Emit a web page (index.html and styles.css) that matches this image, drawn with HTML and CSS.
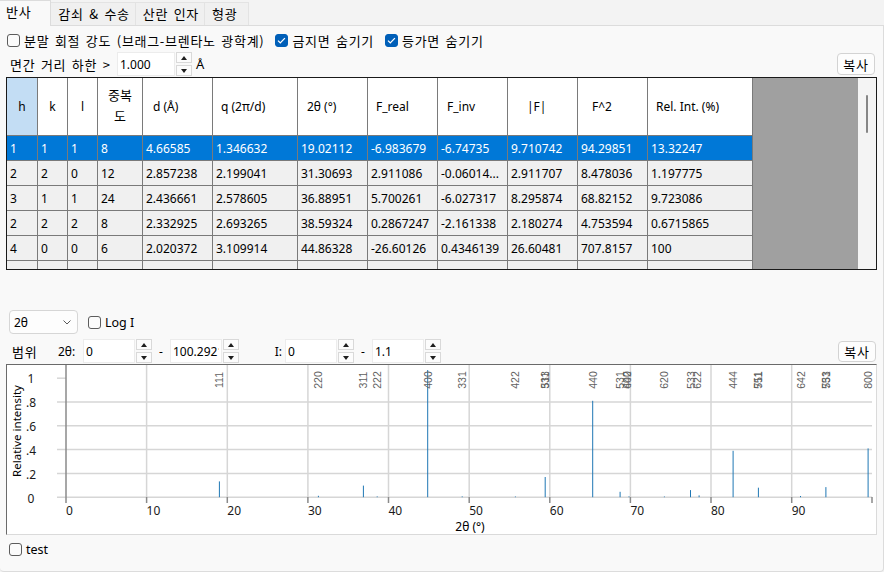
FILE: index.html
```html
<!doctype html>
<html>
    <head>
        <meta charset="utf-8">
        <title>반사</title>
        <link rel="stylesheet" href="styles.css">
    </head>
    <body>
        <div class="tabs">
            <div class="tab ko active">반사</div>
            <div class="tab ko">감쇠 &amp; 수송</div>
            <div class="tab ko">산란 인자</div>
            <div class="tab ko last">형광</div>
        </div>
        <div class="page">
            <div class="opts">
                <label class="check"><span class="cb"></span><span class="ko">분말 회절 강도 (브래그-브렌타노 광학계)</span></label>
                <label class="check"><span class="cb on"><svg viewBox="0 0 13 13"><path d="M3 6.6l2.3 2.3 4.6-4.8"/></svg></span><span class="ko">금지면 숨기기</span></label>
                <label class="check"><span class="cb on"><svg viewBox="0 0 13 13"><path d="M3 6.6l2.3 2.3 4.6-4.8"/></svg></span><span class="ko">등가면 숨기기</span></label>
            </div>
            <div class="dmin">
                <span class="lbl ko">면간 거리 하한 &gt;</span>
                <div class="spin wide"><input type="text" value="1.000"><div class="arrows"><span class="up"></span><span class="down"></span></div></div>
                <span class="unit">Å</span>
                <button type="button" class="btn ko">복사</button>
            </div>

            <div class="grid">
                <table class="refl">
                    <thead>
                        <tr>
                            <th class="w-h ctr sorted">h</th>
                            <th class="w-k ctr">k</th>
                            <th class="w-k ctr">l</th>
                            <th class="w-m ctr">중복<br>도</th>
                            <th class="w-d p10">d (Å)</th>
                            <th class="w-q p8">q (2π/d)</th>
                            <th class="w-d p9">2θ (°)</th>
                            <th class="w-d p8">F_real</th>
                            <th class="w-d p9">F_inv</th>
                            <th class="w-d p19">|F|</th>
                            <th class="w-d p14">F^2</th>
                            <th class="w-r p8">Rel. Int. (%)</th>
                        </tr>
                    </thead>
                    <tbody>
                        <tr class="cur"><td>1</td><td>1</td><td>1</td><td>8</td><td>4.66585</td><td>1.346632</td><td>19.02112</td><td>-6.983679</td><td>-6.74735</td><td>9.710742</td><td>94.29851</td><td>13.32247</td></tr>
                        <tr><td>2</td><td>2</td><td>0</td><td>12</td><td>2.857238</td><td>2.199041</td><td>31.30693</td><td>2.911086</td><td>-0.06014...</td><td>2.911707</td><td>8.478036</td><td>1.197775</td></tr>
                        <tr><td>3</td><td>1</td><td>1</td><td>24</td><td>2.436661</td><td>2.578605</td><td>36.88951</td><td>5.700261</td><td>-6.027317</td><td>8.295874</td><td>68.82152</td><td>9.723086</td></tr>
                        <tr><td>2</td><td>2</td><td>2</td><td>8</td><td>2.332925</td><td>2.693265</td><td>38.59324</td><td>0.2867247</td><td>-2.161338</td><td>2.180274</td><td>4.753594</td><td>0.6715865</td></tr>
                        <tr><td>4</td><td>0</td><td>0</td><td>6</td><td>2.020372</td><td>3.109914</td><td>44.86328</td><td>-26.60126</td><td>0.4346139</td><td>26.60481</td><td>707.8157</td><td>100</td></tr>
                        <tr><td></td><td></td><td></td><td></td><td></td><td></td><td></td><td></td><td></td><td></td><td></td><td></td></tr>
                    </tbody>
                </table>
                <div class="grid-fill"></div>
                <div class="vscroll"><span class="thumb"></span></div>
            </div>

            <div class="plotbar">
                <div class="combo"><span>2θ</span><svg width="8" height="5" viewBox="0 0 8 5"><path d="M0.5 0.5l3.5 3.5 3.5-3.5"/></svg></div>
                <label class="check"><span class="cb"></span>Log I</label>
            </div>
            <div class="range">
                <span class="r-title ko">범위</span>
                <span class="r-axis">2θ:</span>
                <div class="spin"><input type="text" value="0"><div class="arrows"><span class="up"></span><span class="down"></span></div></div>
                <span class="dash">-</span>
                <div class="spin"><input type="text" value="100.2921"><div class="arrows"><span class="up"></span><span class="down"></span></div></div>
                <span class="r-axis i">I:</span>
                <div class="spin"><input type="text" value="0"><div class="arrows"><span class="up"></span><span class="down"></span></div></div>
                <span class="dash">-</span>
                <div class="spin"><input type="text" value="1.1"><div class="arrows"><span class="up"></span><span class="down"></span></div></div>
                <button type="button" class="btn ko">복사</button>
            </div>

            <div class="chart">
                <svg width="868" height="169" viewBox="8 365 868 169">
                    <g class="gridlines">
                        <line x1="58" y1="497.2" x2="873" y2="497.2"/>
                        <line x1="58" y1="473.4" x2="873" y2="473.4"/>
                        <line x1="58" y1="449.6" x2="873" y2="449.6"/>
                        <line x1="58" y1="425.8" x2="873" y2="425.8"/>
                        <line x1="58" y1="402" x2="873" y2="402"/>
                        <line x1="58" y1="378.2" x2="67" y2="378.2"/>
                        <line x1="147.6" y1="365" x2="147.6" y2="497"/>
                        <line x1="228.3" y1="365" x2="228.3" y2="497"/>
                        <line x1="308.9" y1="365" x2="308.9" y2="497"/>
                        <line x1="389.5" y1="365" x2="389.5" y2="497"/>
                        <line x1="470.2" y1="365" x2="470.2" y2="497"/>
                        <line x1="550.8" y1="365" x2="550.8" y2="497"/>
                        <line x1="631.4" y1="365" x2="631.4" y2="497"/>
                        <line x1="712" y1="365" x2="712" y2="497"/>
                        <line x1="792.7" y1="365" x2="792.7" y2="497"/>
                    </g>
                    <g class="axis">
                        <line x1="67" y1="365" x2="67" y2="503"/>
                        <line x1="147.6" y1="497" x2="147.6" y2="503"/>
                        <line x1="228.3" y1="497" x2="228.3" y2="503"/>
                        <line x1="308.9" y1="497" x2="308.9" y2="503"/>
                        <line x1="389.5" y1="497" x2="389.5" y2="503"/>
                        <line x1="470.2" y1="497" x2="470.2" y2="503"/>
                        <line x1="550.8" y1="497" x2="550.8" y2="503"/>
                        <line x1="631.4" y1="497" x2="631.4" y2="503"/>
                        <line x1="712" y1="497" x2="712" y2="503"/>
                        <line x1="792.7" y1="497" x2="792.7" y2="503"/>
                        <line x1="873" y1="497" x2="873" y2="503"/>
                    </g>
                    <g class="peaks">
                        <line x1="220.4" y1="497.2" x2="220.4" y2="481.4"/>
                        <line x1="319.4" y1="497.2" x2="319.4" y2="495.8"/>
                        <line x1="364.4" y1="497.2" x2="364.4" y2="485.6"/>
                        <line x1="378.2" y1="497.2" x2="378.2" y2="496.4"/>
                        <line x1="428.7" y1="497.2" x2="428.7" y2="370"/>
                        <line x1="463.2" y1="497.2" x2="463.2" y2="496.4"/>
                        <line x1="516.4" y1="497.2" x2="516.4" y2="496.5"/>
                        <line x1="546.2" y1="497.2" x2="546.2" y2="477"/>
                        <line x1="593.7" y1="497.2" x2="593.7" y2="400.8"/>
                        <line x1="621.1" y1="497.2" x2="621.1" y2="491.8"/>
                        <line x1="630" y1="497.2" x2="630" y2="496.4"/>
                        <line x1="665.4" y1="497.2" x2="665.4" y2="496.5"/>
                        <line x1="691.5" y1="497.2" x2="691.5" y2="490.1"/>
                        <line x1="700.1" y1="497.2" x2="700.1" y2="495.4"/>
                        <line x1="734.1" y1="497.2" x2="734.1" y2="450.8"/>
                        <line x1="759.4" y1="497.2" x2="759.4" y2="487.7"/>
                        <line x1="801.5" y1="497.2" x2="801.5" y2="496"/>
                        <line x1="826.9" y1="497.2" x2="826.9" y2="487.1"/>
                        <line x1="869.1" y1="497.2" x2="869.1" y2="448.4"/>
                    </g>
                    <g class="hkl">
                        <text x="220.4" y="380" transform="rotate(-90 220.4 380)">111</text>
                        <text x="319.4" y="380" transform="rotate(-90 319.4 380)">220</text>
                        <text x="364.4" y="380" transform="rotate(-90 364.4 380)">311</text>
                        <text x="378.2" y="380" transform="rotate(-90 378.2 380)">222</text>
                        <text x="428.7" y="380" transform="rotate(-90 428.7 380)">400</text>
                        <text x="463.2" y="380" transform="rotate(-90 463.2 380)">331</text>
                        <text x="516.4" y="380" transform="rotate(-90 516.4 380)">422</text>
                        <text x="546.2" y="380" transform="rotate(-90 546.2 380)">333</text>
                        <text x="546.2" y="380" transform="rotate(-90 546.2 380)">511</text>
                        <text x="593.7" y="380" transform="rotate(-90 593.7 380)">440</text>
                        <text x="621.1" y="380" transform="rotate(-90 621.1 380)">531</text>
                        <text x="628" y="380" transform="rotate(-90 628 380)">442</text>
                        <text x="628" y="380" transform="rotate(-90 628 380)">600</text>
                        <text x="665.4" y="380" transform="rotate(-90 665.4 380)">620</text>
                        <text x="691.5" y="380" transform="rotate(-90 691.5 380)">533</text>
                        <text x="698" y="380" transform="rotate(-90 698 380)">622</text>
                        <text x="734.1" y="380" transform="rotate(-90 734.1 380)">444</text>
                        <text x="759.4" y="380" transform="rotate(-90 759.4 380)">551</text>
                        <text x="759.4" y="380" transform="rotate(-90 759.4 380)">711</text>
                        <text x="801.5" y="380" transform="rotate(-90 801.5 380)">642</text>
                        <text x="826.9" y="380" transform="rotate(-90 826.9 380)">553</text>
                        <text x="826.9" y="380" transform="rotate(-90 826.9 380)">731</text>
                        <text x="869.1" y="380" transform="rotate(-90 869.1 380)">800</text>
                    </g>
                    <g class="ticklbl">
                        <text x="67" y="515">0</text>
                        <text x="147.6" y="515">10</text>
                        <text x="228.3" y="515">20</text>
                        <text x="308.9" y="515">30</text>
                        <text x="389.5" y="515">40</text>
                        <text x="470.2" y="515">50</text>
                        <text x="550.8" y="515">60</text>
                        <text x="631.4" y="515">70</text>
                        <text x="712" y="515">80</text>
                        <text x="792.7" y="515">90</text>
                    </g>
                    <g class="ticklbl ylbl">
                        <text x="32" y="383">1</text>
                        <text x="32" y="407">.8</text>
                        <text x="32" y="431">.6</text>
                        <text x="32" y="455">.4</text>
                        <text x="32" y="479">.2</text>
                        <text x="32" y="502.5">0</text>
                    </g>
                    <text class="ytitle" x="17" y="431" transform="rotate(-90 17 431)">Relative intensity</text>
                    <text class="xtitle" x="471" y="531">2θ (°)</text>
                </svg>
            </div>

            <div class="foot">
                <label class="check"><span class="cb"></span>test</label>
            </div>
        </div>
    </body>
</html>
```

FILE: styles.css
```css
html, body {
  margin: 0;
  overflow: hidden;
}

body {
  width: 884px;
  height: 572px;
  background: #f3f3f3;
  color: #000;
  font: 12px "Noto Sans", "Noto Sans CJK KR", sans-serif;
}

/* korean labels run wider in the original UI font */
.ko {
  font-family: "Noto Sans CJK KR", sans-serif;
  font-size: 13px;
  letter-spacing: 0.7px;
  word-spacing: 2px;
}

/* tab strip */
.tabs {
  display: flex;
  align-items: flex-end;
  height: 25px;
}

.tab {
  height: 23px;
  box-sizing: border-box;
  padding: 0 5px 0 7px;
  border: 1px solid #e3e3e3;
  border-bottom: none;
  border-left: none;
  background: #f0f0f0;
  line-height: 21px;
}

.tab.last {
  padding-right: 11px;
}

.tab.active {
  height: 26px;
  margin-bottom: -1px;
  padding: 0 19px 0 6px;
  position: relative;
  background: #f9f9f9;
  border: 1px solid #dcdcdc;
  border-bottom: none;
  border-left: none;
  line-height: 22px;
}

.page {
  height: 547px;
  box-sizing: border-box;
  padding: 0 6px;
  background: #f9f9f9;
  border: 1px solid #dcdcdc;
  border-left: none;
  border-radius: 0 0 4px 4px;
}

/* checkboxes */
.check {
  display: inline-flex;
  align-items: center;
  gap: 4px;
  font-size: 12.5px;
}

.cb {
  display: inline-block;
  width: 13px;
  height: 13px;
  box-sizing: border-box;
  border: 1px solid #5c5c5c;
  border-radius: 3px;
  background: #fbfbfb;
}

.cb svg {
  display: block;
  width: 13px;
  height: 13px;
  margin: -1px;
}

.cb svg path {
  fill: none;
  stroke: #fff;
  stroke-width: 1.3;
}

.cb.on {
  background: #005fb8;
  border-color: #005fb8;
}

.opts {
  display: flex;
  align-items: center;
  height: 20px;
  margin-top: 4px;
  padding-left: 1px;
}

.opts .check + .check {
  margin-left: 11px;
}

/* spin boxes */
.spin {
  display: flex;
  height: 24px;
}

.spin input {
  width: 52px;
  height: 24px;
  box-sizing: border-box;
  margin: 0;
  padding: 0 2px;
  border: 1px solid #ececec;
  background: #fff;
  font: 12px "Noto Sans", sans-serif;
  color: #000;
  outline: none;
}

.spin.wide input {
  width: 58px;
}

.arrows {
  display: flex;
  flex-direction: column;
  justify-content: space-between;
  width: 16px;
  margin-left: 1px;
}

.arrows span {
  display: flex;
  align-items: center;
  justify-content: center;
  height: 11px;
  box-sizing: border-box;
  border: 1px solid #d9d9d9;
  background: #fcfcfc;
}

.arrows .up::before,
.arrows .down::before {
  content: "";
  border-left: 3.5px solid transparent;
  border-right: 3.5px solid transparent;
}

.arrows .up::before {
  border-bottom: 4px solid #1e1e1e;
}

.arrows .down::before {
  border-top: 4px solid #1e1e1e;
}

.btn {
  width: 38px;
  height: 22px;
  margin: 0 2px 0 auto;
  padding: 0;
  border: 1px solid #d3d3d3;
  border-radius: 4px;
  background: #fdfdfd;
  color: #000;
}

.dmin {
  display: flex;
  align-items: center;
  height: 24px;
  margin-top: 2px;
}

.dmin .lbl {
  width: 111px;
  box-sizing: border-box;
  padding-left: 4px;
}

.unit {
  margin-left: 4px;
  font-size: 13px;
}

/* reflection grid */
.grid {
  display: flex;
  height: 193px;
  box-sizing: border-box;
  margin-top: 1px;
  border: 1px solid #1a1a1a;
  overflow: hidden;
}

.refl {
  flex: none;
  width: 746px;
  border-collapse: separate;
  border-spacing: 0;
  table-layout: fixed;
  align-self: flex-start;
}

.refl th,
.refl td {
  box-sizing: border-box;
  border-right: 1px solid #7a7a7a;
  border-bottom: 1px solid #7a7a7a;
  white-space: nowrap;
  overflow: hidden;
  font-weight: normal;
  vertical-align: middle;
}

.refl th {
  height: 58px;
  background: #fff;
  text-align: left;
  padding: 0;
  line-height: 20px;
}

.refl th.sorted {
  background: #c3ddf4;
}

.refl th.ctr {
  text-align: center;
}

.refl th.w-m {
  font-family: "Noto Sans CJK KR", sans-serif;
  font-size: 13px;
  line-height: 21px;
  padding-bottom: 3px;
}

.w-h { width: 31px; }
.w-k { width: 30px; }
.w-m { width: 45px; }
.w-d { width: 70px; }
.w-q { width: 85px; }
.w-r { width: 105px; }

.p8 { padding-left: 8px !important; }
.p9 { padding-left: 9px !important; }
.p10 { padding-left: 10px !important; }
.p14 { padding-left: 14px !important; }
.p19 { padding-left: 19px !important; }

.refl td {
  height: 25px;
  padding: 0 0 0 3px;
  background: #f0f0f0;
}

.refl tr.cur td {
  background: #0078d7;
  color: #fff;
}

.grid-fill {
  width: 105px;
  flex: none;
  background: #a0a0a0;
}

.vscroll {
  flex: 1;
  padding-top: 17px;
  background: #f4f4f4;
}

.vscroll .thumb {
  display: block;
  width: 2px;
  height: 38px;
  margin-left: 8px;
  border-radius: 1px;
  background: #868686;
}

/* plot controls */
.plotbar {
  display: flex;
  align-items: center;
  height: 24px;
  margin-top: 40px;
}

.combo {
  display: flex;
  align-items: center;
  justify-content: space-between;
  width: 69px;
  height: 24px;
  box-sizing: border-box;
  margin-left: 3px;
  padding: 0 6px 0 4px;
  border: 1px solid #d6d6d6;
  border-radius: 4px;
  background: #fdfdfd;
}

.combo svg path {
  fill: none;
  stroke: #5a5a5a;
  stroke-width: 1;
}

.plotbar .check {
  margin-left: 10px;
}

.range {
  display: flex;
  align-items: center;
  height: 24px;
  margin-top: 5px;
}

.r-title {
  width: 52px;
  box-sizing: border-box;
  padding-left: 6px;
}

.r-axis {
  width: 25px;
}

.r-axis.i {
  width: 46px;
  box-sizing: border-box;
  padding-right: 3px;
  text-align: right;
}

.dash {
  width: 18px;
  text-align: center;
}

.range .btn {
  height: 21px;
  margin-right: 1px;
}

/* chart */
.chart {
  height: 171px;
  box-sizing: border-box;
  margin-top: 1px;
  background: #fff;
  border: 1px solid #dadada;
  border-top-color: #6a6a6a;
  border-left-color: #6a6a6a;
}

.chart svg {
  display: block;
}

.gridlines line {
  stroke: #d6d6d6;
  stroke-width: 1.5;
}

.axis line {
  stroke: #8a8a8a;
  stroke-width: 1.5;
}

.peaks line {
  stroke: #1f77b4;
  stroke-width: 1;
}

.hkl text {
  font: 10.5px "Liberation Sans", Arial, sans-serif;
  fill: #606060;
  text-anchor: middle;
  dominant-baseline: central;
}

.ticklbl text {
  font: 12px "Noto Sans", sans-serif;
  fill: #1a1a1a;
}

.ylbl text {
  text-anchor: middle;
}

.ytitle {
  font: 11.5px "Noto Sans", sans-serif;
  fill: #000;
  text-anchor: middle;
  dominant-baseline: central;
}

.xtitle {
  font: 12px "Noto Sans", sans-serif;
  fill: #000;
  text-anchor: middle;
}

.foot {
  display: flex;
  align-items: center;
  height: 19px;
  margin-top: 5px;
  padding-left: 3px;
}
```
